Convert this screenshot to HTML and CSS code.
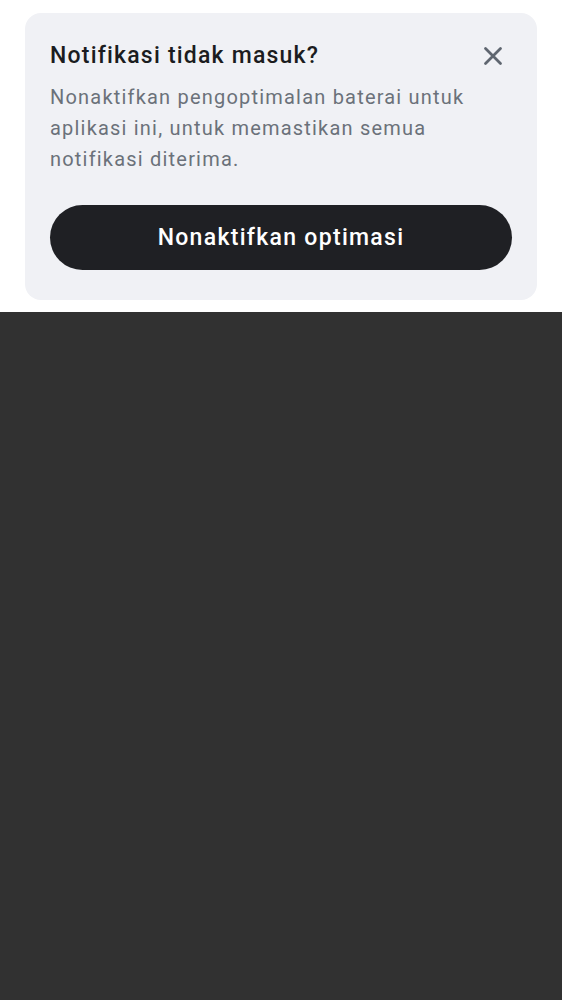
FILE: index.html
```html
<!DOCTYPE html>
<html>
<head>
<meta charset="utf-8">
<link rel="stylesheet" href="styles.css">
</head>
<body>
<div class="top">
  <div class="card">
    <div class="head">
      <h1 class="title">Notifikasi tidak masuk?</h1>
      <button class="close" aria-label="Tutup">
        <svg width="24" height="24" viewBox="0 0 24 24"><path d="M4.5 4.5L19.5 19.5M19.5 4.5L4.5 19.5" stroke="#5f6670" stroke-width="2.8" stroke-linecap="round" fill="none"/></svg>
      </button>
    </div>
    <p class="desc">Nonaktifkan pengoptimalan baterai untuk aplikasi ini, untuk memastikan semua notifikasi diterima.</p>
    <button class="cta">Nonaktifkan optimasi</button>
  </div>
</div>
<div class="dark"></div>
</body>
</html>
```
FILE: styles.css
```css
html, body { margin: 0; padding: 0; }
body {
  font-family: Roboto, "Noto Sans", sans-serif;
  background: #313131;
  width: 562px;
  height: 1000px;
  display: flex;
  flex-direction: column;
}
.top {
  background: #ffffff;
  padding: 13px 25px 12px 25px;
}
.card {
  background: #f0f1f5;
  border-radius: 16px;
  padding: 28px 25px 30px 25px;
  display: flex;
  flex-direction: column;
}
.head {
  display: flex;
  justify-content: space-between;
  align-items: center;
}
.title {
  margin: 0;
  font-size: 23px;
  font-weight: 500;
  letter-spacing: 1.2px;
  color: #1b1c20;
  line-height: 30px;
}
.close {
  border: 0;
  background: none;
  padding: 0;
  margin-right: 7px;
  width: 24px;
  height: 24px;
  display: flex;
}
.desc {
  margin: 11px 0 0 0;
  font-size: 20px;
  line-height: 31px;
  letter-spacing: 1.2px;
  color: #6b717a;
}
.cta {
  margin-top: 30px;
  height: 65px;
  border: 0;
  border-radius: 33px;
  background: #1f2024;
  color: #ffffff;
  font-family: Roboto, "Noto Sans", sans-serif;
  font-size: 23px;
  font-weight: 500;
  letter-spacing: 1.3px;
}
.dark { flex: 1; background: #313131; }
```
